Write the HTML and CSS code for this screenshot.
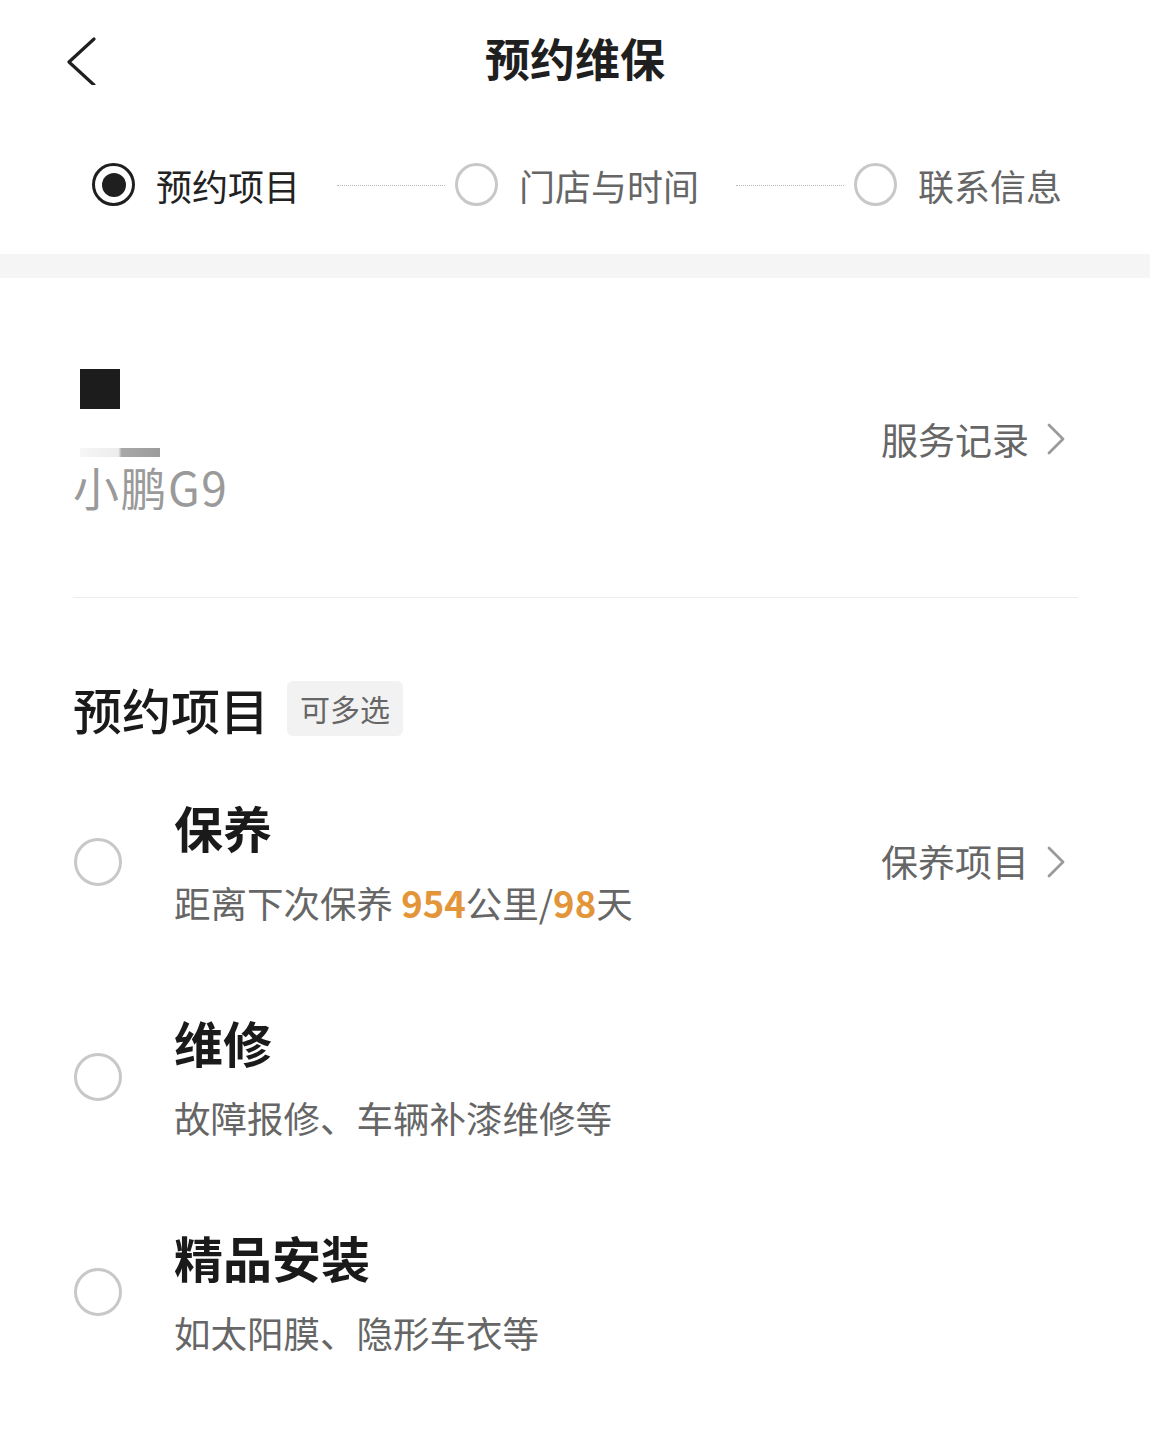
FILE: index.html
```html
<!DOCTYPE html>
<html lang="zh-CN">
<head>
    <meta charset="UTF-8">
    <meta name="viewport" content="width=device-width, initial-scale=1.0">
    <title>预约维保</title>
    <link rel="stylesheet" href="styles.css">
</head>
<body>
    <header class="topbar">
        <a class="back" href="#">
            <svg width="32" height="50" viewBox="0 0 32 50"><path d="M28 4 L3 27 L28 50" fill="none" stroke="#1f1f1f" stroke-width="3.2" stroke-linecap="round" stroke-linejoin="round"/></svg>
        </a>
        <h1 class="title">预约维保</h1>
        <span></span>
    </header>

    <div class="steps">
        <div class="step active"><span class="step-dot"></span><span class="step-label">预约项目</span></div>
        <span class="step-line"></span>
        <div class="step"><span class="step-dot"></span><span class="step-label">门店与时间</span></div>
        <span class="step-line"></span>
        <div class="step"><span class="step-dot"></span><span class="step-label">联系信息</span></div>
    </div>

    <div class="band"></div>

    <section class="car">
        <div class="car-info">
            <div class="plate"></div>
            <div class="plate-bar"></div>
            <div class="car-name">小鹏G9</div>
        </div>
        <a class="link" href="#">服务记录
            <svg width="20" height="32" viewBox="0 0 20 32"><path d="M3 2 L17 16 L3 30" fill="none" stroke="#9a9a9a" stroke-width="2.8" stroke-linecap="round" stroke-linejoin="round"/></svg>
        </a>
    </section>

    <section class="booking">
        <div class="booking-head">
            <h2>预约项目</h2>
            <span class="tag">可多选</span>
        </div>
        <ul class="items">
            <li class="item">
                <span class="radio"></span>
                <div class="item-body">
                    <div class="item-title">保养</div>
                    <div class="item-desc">距离下次保养 <em>954</em>公里/<em>98</em>天</div>
                </div>
                <a class="link" href="#">保养项目
                    <svg width="20" height="32" viewBox="0 0 20 32"><path d="M3 2 L17 16 L3 30" fill="none" stroke="#9a9a9a" stroke-width="2.8" stroke-linecap="round" stroke-linejoin="round"/></svg>
                </a>
            </li>
            <li class="item">
                <span class="radio"></span>
                <div class="item-body">
                    <div class="item-title">维修</div>
                    <div class="item-desc">故障报修、车辆补漆维修等</div>
                </div>
            </li>
            <li class="item">
                <span class="radio"></span>
                <div class="item-body">
                    <div class="item-title">精品安装</div>
                    <div class="item-desc">如太阳膜、隐形车衣等</div>
                </div>
            </li>
        </ul>
    </section>
</body>
</html>
```

FILE: styles.css
```css
body {
    margin: 0;
    font-family: "Noto Sans CJK SC", "Noto Sans", sans-serif;
    color: #1a1a1a;
    background-color: #fff;
}
a {
    text-decoration: none;
    color: inherit;
}
.topbar {
    height: 120px;
    box-sizing: border-box;
    padding-bottom: 6px;
    display: grid;
    grid-template-columns: 1fr auto 1fr;
    align-items: center;
}
.back {
    display: flex;
    margin-left: 66px;
    margin-top: 6px;
}
.title {
    margin: 0;
    font-size: 45px;
    line-height: 45px;
    font-weight: 700;
    color: #1f1f1f;
}
.steps {
    height: 134px;
    box-sizing: border-box;
    padding: 0 0 5px 92px;
    display: flex;
    align-items: center;
}
.step {
    display: flex;
    align-items: center;
    gap: 21px;
}
.step-dot {
    width: 43px;
    height: 43px;
    box-sizing: border-box;
    border: 3px solid #c8c8c8;
    border-radius: 50%;
    display: flex;
    align-items: center;
    justify-content: center;
}
.step.active .step-dot {
    border-color: #1f1f1f;
}
.step.active .step-dot::after {
    content: "";
    width: 24px;
    height: 24px;
    border-radius: 50%;
    background-color: #1f1f1f;
}
.step-label {
    font-size: 36px;
    line-height: 36px;
    color: #666;
}
.step.active .step-label {
    color: #222;
}
.step-line {
    width: 108px;
    border-top: 1px dotted #b8b8b8;
    margin: 2px 10px 0 37px;
}
.band {
    height: 24px;
    background-color: #f5f5f5;
}
.car {
    margin: 0 72px 0 73px;
    padding: 91px 12px 88px 0;
    border-bottom: 1px solid #ececec;
    display: flex;
    align-items: center;
    justify-content: space-between;
}
.plate {
    width: 40px;
    height: 40px;
    margin-left: 7px;
    background-color: #1c1c1c;
}
.plate-bar {
    width: 80px;
    height: 9px;
    margin: 39px 0 0 7px;
    background: linear-gradient(to right, #f6f6f6, #ececec 48%, #a8a8a8 52%, #9c9c9c);
}
.car-name {
    margin-top: 6px;
    font-size: 46px;
    line-height: 46px;
    letter-spacing: 1.5px;
    color: #9a9a9a;
}
.link {
    display: flex;
    align-items: center;
    gap: 17px;
    font-size: 37px;
    line-height: 37px;
    color: #666;
}
.booking {
    margin: 0 72px 0 73px;
    padding-top: 83px;
}
.booking-head {
    display: flex;
    align-items: center;
    gap: 18px;
}
.booking-head h2 {
    margin: 0;
    font-size: 49px;
    line-height: 49px;
    font-weight: 500;
    color: #1a1a1a;
}
.tag {
    height: 55px;
    padding: 0 13px;
    font-size: 30px;
    line-height: 55px;
    color: #666;
    background-color: #f2f2f2;
    border-radius: 6px;
}
.items {
    list-style: none;
    margin: 18px 0 0;
    padding: 0;
}
.item {
    display: flex;
    align-items: center;
    padding: 48px 12px 48px 1px;
}
.radio {
    width: 48px;
    height: 48px;
    box-sizing: border-box;
    border: 3px solid #c8c8c8;
    border-radius: 50%;
    margin-right: 52px;
    flex-shrink: 0;
}
.item-body {
    flex: 1;
}
.item-title {
    font-size: 49px;
    line-height: 49px;
    font-weight: 700;
    color: #1a1a1a;
}
.item-desc {
    margin-top: 33px;
    font-size: 36.5px;
    line-height: 37px;
    color: #666;
}
.item-desc em {
    font-style: normal;
    font-weight: 700;
    color: #e3953a;
}
```
